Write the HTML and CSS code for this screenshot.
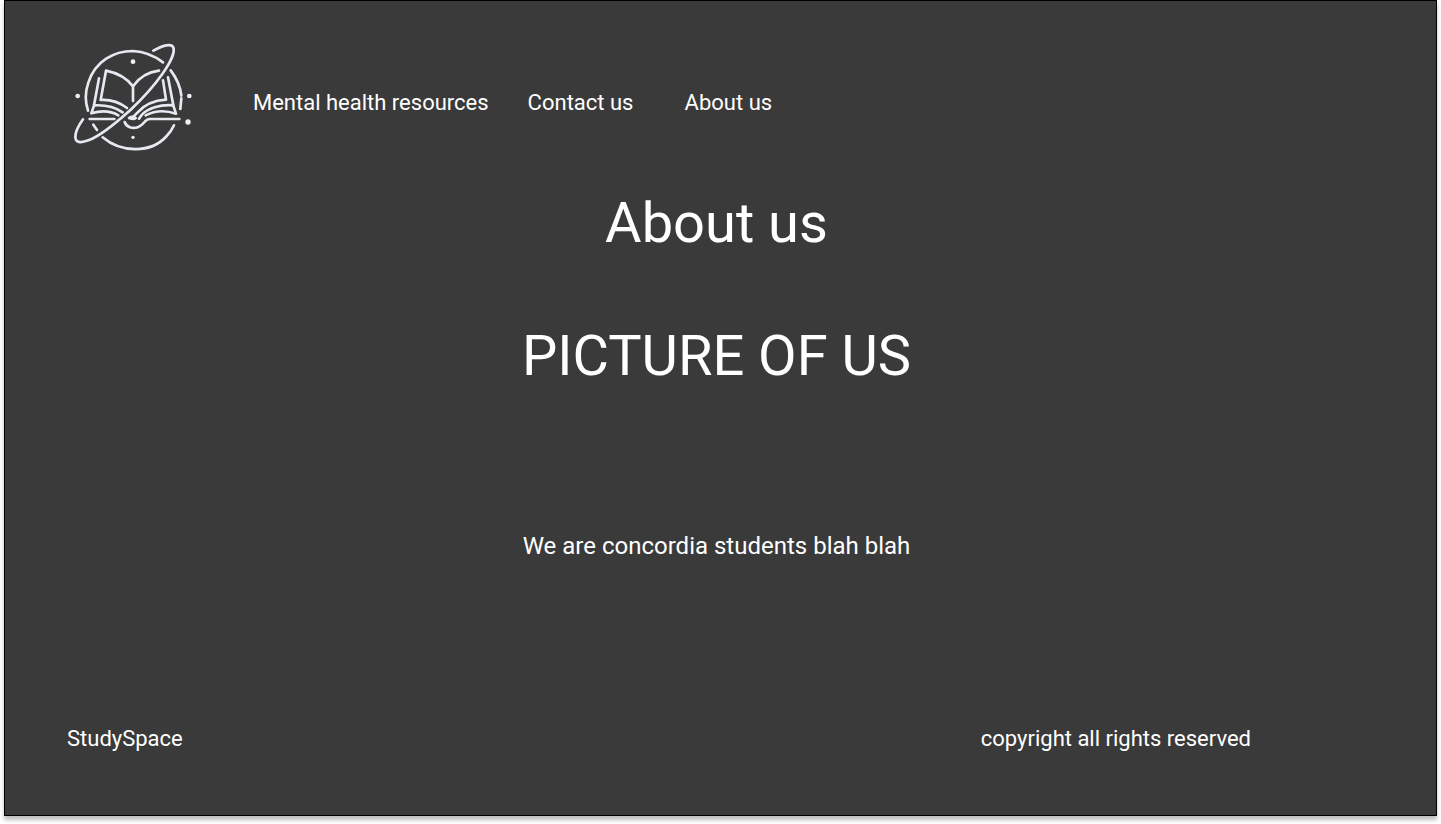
FILE: index.html
```html
<!DOCTYPE html>
<html lang="en">
<head>
  <meta charset="utf-8">
  <meta name="viewport" content="width=device-width, initial-scale=1">
  <title>StudySpace - About us</title>
  <link rel="stylesheet" href="styles.css">
</head>
<body>
  <div class="page">
    <header class="header">
      <svg class="logo" viewBox="0 0 420 375" role="img" aria-label="StudySpace logo">
        <g class="logo-lines">
          <!-- planet outline -->
          <path d="M69 227C61 203 60 172 70 143C91 78 147 48 204 48C238 50 268 62 294 82"/>
          <path d="M317 106C333 127 346 155 349 182"/>
          <path d="M349 190L346 222"/>
          <path d="M113 307C168 354 258 356 305 303Q319 289 327 271"/>
          <!-- orbit -->
          <path d="M265 47C288 35 309 25 322 33C335 46 314 86 292 117C263 158 231 192 197 224C154 263 105 303 70 316C47 325 31 323 31 305C31 289 42 270 54 253"/>
          <path d="M85 269L96 285"/>
          <!-- left pages -->
          <path d="M204 198V154C187 132 158 114 123 107L107 195C139 193 166 204 186 219"/>
          <path d="M102 130L87 211C123 209 149 215 173 232"/>
          <path d="M87 212L79 235C113 225 138 228 160 241"/>
          <path d="M74 252H148"/>
          <!-- right pages -->
          <path d="M204 154C222 128 250 111 282 107"/>
          <path d="M294 136L303 194C267 196 237 211 218 232L206 244"/>
          <path d="M309 127L325 211C285 208 248 219 230 240L222 251"/>
          <path d="M325 212L333 236C298 224 265 229 242 241"/>
          <path d="M343 252H254C238 252 238 270 220 276C202 283 184 276 179 261"/>
          <path d="M192 249Q202 242 212 249Q207 254 192 249"/>
        </g>
        <g class="logo-dots">
          <circle cx="204" cy="80" r="7"/>
          <circle cx="38" cy="183" r="7"/>
          <circle cx="373" cy="183" r="7"/>
          <circle cx="369" cy="261" r="8"/>
          <circle cx="204" cy="307" r="5"/>
        </g>
      </svg>
      <nav class="nav" aria-label="Main">
        <a class="nav-link" href="#">Mental health resources</a>
        <a class="nav-link nav-link-wide" href="#">Contact us</a>
        <a class="nav-link" href="#">About us</a>
      </nav>
    </header>
    <main class="main">
      <h1 class="title">About us</h1>
      <p class="picture">PICTURE OF US</p>
      <p class="intro">We are concordia students blah blah</p>
    </main>
    <footer class="footer">
      <span>StudySpace</span>
      <span>copyright all rights reserved</span>
    </footer>
  </div>
</body>
</html>
```
FILE: styles.css
```css
* {
  box-sizing: border-box;
}

body {
  margin: 0;
  background: #fff;
  color: #fff;
  font-family: Roboto, "Liberation Sans", sans-serif;
  font-size: 22px;
  line-height: 26px;
}

.page {
  display: flex;
  flex-direction: column;
  min-height: calc(100vh - 8px);
  margin: 0 4px 8px;
  border: 1px solid #000;
  background: #3a3a3a;
  box-shadow: 0 4px 4px rgba(0, 0, 0, 0.25);
}

.header {
  display: flex;
  align-items: center;
  gap: 48px;
  padding: 34px 60px 0;
}

.logo {
  flex: none;
  width: 140px;
}

.logo-lines {
  fill: none;
  stroke: #e6eaf0;
  stroke-width: 8;
  stroke-linecap: round;
  stroke-linejoin: round;
}

.logo-dots {
  fill: #eef1f5;
}

.nav {
  display: flex;
  flex-wrap: wrap;
  gap: 39px;
  padding-top: 10px;
}

.nav-link {
  color: inherit;
  text-decoration: none;
}

.nav-link-wide {
  min-width: 118px;
}

.main {
  flex: 1;
  padding: 30px 8px 0 0;
  text-align: center;
}

.title,
.picture {
  margin: 0 0 67px;
  font-size: 56px;
  font-weight: 400;
  line-height: 66px;
}

.intro {
  margin: 143px 0 0;
  font-size: 24px;
  line-height: 28px;
}

.footer {
  display: flex;
  flex-wrap: wrap;
  justify-content: space-between;
  gap: 24px;
  padding: 0 185px 63px 62px;
}
```
